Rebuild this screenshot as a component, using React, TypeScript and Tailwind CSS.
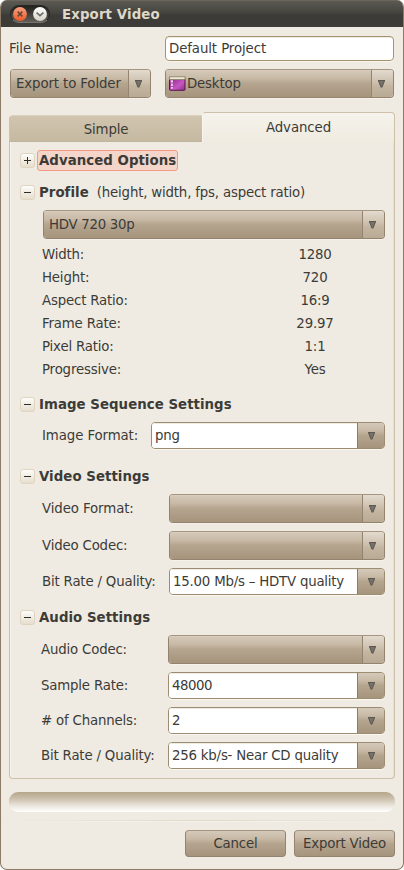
import type { ReactNode } from "react";

function Arrow() {
  return (
    <svg width="7" height="8" viewBox="0 0 7 8" className="block">
      <path d="M0 0.5H7L4.2 7.5H2.8Z" fill="#77716a" />
      <path d="M0 0.5H7M0.7 1L3.1 7.3M6.3 1L3.9 7.3" stroke="#5c5953" strokeWidth="1" fill="none" />
    </svg>
  );
}

const dark = "bg-[linear-gradient(#d5c9b9_0%,#c8baa6_30%,#b5a58f_50%,#a6947c_100%)]";

function Combo({ className, children }: { className: string; children?: ReactNode }) {
  return (
    <div className={`flex h-[29px] overflow-hidden rounded-[4px] border border-[#93836f] border-t-[#a39580] shadow-[0_1px_0_#f6f2ea] ${className}`}>
      <div className={`flex min-w-0 flex-1 items-center whitespace-nowrap pl-[5px] shadow-[inset_0_1px_0_#d8cdbf] ${dark}`}>{children}</div>
      <div className="flex w-[22px] items-center justify-center border-l border-[#93836f] bg-[linear-gradient(#e3dbcf_0%,#d2c6b5_35%,#c3b5a0_60%,#b9aa94_100%)] pr-[2px] pt-px">
        <Arrow />
      </div>
    </div>
  );
}

function Entry({ className, children }: { className: string; children?: ReactNode }) {
  return (
    <div className={`flex h-[27px] overflow-hidden rounded-[4px] border border-[#9c8c72] shadow-[0_1px_0_#faf7f1] ${className}`}>
      <div className="flex min-w-0 flex-1 items-center whitespace-nowrap bg-white pl-[3px] shadow-[inset_0_1px_0_#eeeae4]">{children}</div>
      <div className={`flex w-[27px] items-center justify-center border-l border-[#8c7d69] pl-px ${dark}`}>
        <Arrow />
      </div>
    </div>
  );
}

function Heading({ open = true, className, children }: { open?: boolean; className: string; children: ReactNode }) {
  return (
    <div className={`flex h-[21px] items-center pl-[10px] ${className}`}>
      <div className="mr-[2px] flex h-[15px] w-[15px] shrink-0 items-center justify-center rounded-[3px] border border-[#dfd4c0] bg-gradient-to-b from-[#fdfcfa] to-[#e6dece]">
        <svg width="9" height="9" viewBox="0 0 9 9">
          <path d={open ? "M1 4.5H8" : "M1 4.5H8M4.5 1V8"} stroke="#2f2e2a" />
        </svg>
      </div>
      {children}
    </div>
  );
}

function Title({ children }: { children: ReactNode }) {
  return <b className="ml-[2px] tracking-[0.04px]">{children}</b>;
}

function Row({ label, className, labelClass, children }: { label: string; className: string; labelClass: string; children: ReactNode }) {
  return (
    <div className={`flex items-center pr-[9px] ${className}`}>
      <div className={`shrink-0 whitespace-nowrap ${labelClass}`}>{label}</div>
      {children}
    </div>
  );
}

const profile = [
  ["Width:", "1280"],
  ["Height:", "720"],
  ["Aspect Ratio:", "16:9"],
  ["Frame Rate:", "29.97"],
  ["Pixel Ratio:", "1:1"],
  ["Progressive:", "Yes"],
];

export default function App() {
  return (
    <div className="h-[870px] w-[404px] bg-white font-['DejaVu_Sans',sans-serif] text-[13.33px] leading-[16px] tracking-[-0.18px] text-[#3c3b37]">
      <div className="flex h-[870px] flex-col overflow-hidden rounded-[7px] border border-[#8b7b67] border-t-0 bg-[#efebe3]">
        <header className="flex h-[27px] shrink-0 items-center border-t border-[#69665d] bg-[linear-gradient(#5b5952_0%,#45443f_45%,#3c3b37_55%)] pl-[9px]">
          <div className="flex h-[18px] w-[40px] items-center gap-[6px] rounded-full border border-[#282723] border-b-[#77756d] bg-gradient-to-b from-[#22211e] to-[#62605a] pl-[2px]">
            <svg width="14" height="14" viewBox="0 0 15 15">
              <defs>
                <linearGradient id="orange" x2="0" y2="1">
                  <stop stopColor="#f9a17f" />
                  <stop offset="1" stopColor="#ec5a28" />
                </linearGradient>
              </defs>
              <circle cx="7.5" cy="7.5" r="7.4" fill="url(#orange)" />
              <path d="M5 5L10 10M10 5L5 10" stroke="#6b4434" strokeWidth="1.7" />
            </svg>
            <svg width="14" height="14" viewBox="0 0 15 15">
              <defs>
                <linearGradient id="ivory" x2="0" y2="1">
                  <stop stopColor="#ffffff" />
                  <stop offset="1" stopColor="#d6d2c9" />
                </linearGradient>
              </defs>
              <circle cx="7.5" cy="7.5" r="7.4" fill="url(#ivory)" />
              <path d="M3.8 6L7.5 9.3L11.2 6" fill="none" stroke="#6d6a63" strokeWidth="1.6" />
            </svg>
          </div>
          <div className="ml-[12px] pt-[2px] text-[13.33px] font-bold tracking-[0.12px] text-[#dfd8c8]">Export Video</div>
        </header>

        <div className="mt-[9px] flex h-[25px] shrink-0 items-center pl-[8px] pr-[9px]">
          <div className="w-[156px] tracking-[-0.04px]">File Name:</div>
          <div className="flex h-[25px] flex-1 items-center rounded-[4px] border border-[#a4946f] bg-white pl-[3px] tracking-[-0.1px] shadow-[inset_0_1px_0_#eeeae4,0_1px_0_#f8f5ee]">Default Project</div>
        </div>

        <div className="mt-[8px] flex shrink-0 gap-[14px] pl-[9px] pr-[9px]">
          <Combo className="w-[141px]"><span className="tracking-[-0.12px]">Export to Folder</span></Combo>
          <Combo className="flex-1">
            <svg width="17" height="15" viewBox="0 0 17 15" className="-ml-[2px] mr-px">
              <defs>
                <linearGradient id="screen" x2="1" y2="1">
                  <stop stopColor="#8f1d85" />
                  <stop offset="0.6" stopColor="#c558c2" />
                  <stop offset="1" stopColor="#902d88" />
                </linearGradient>
              </defs>
              <rect x="0.5" y="2" width="15.5" height="12.3" rx="0.8" fill="url(#screen)" stroke="#57154f" />
              <rect x="0.5" y="0.8" width="15.5" height="2.8" fill="#ece7d4" stroke="#858064" strokeWidth="0.8" />
              <path d="M1.6 4.2H4V6.6H1.6ZM2 7.6H3.8V10H2ZM2 11H3.8V12.8H2Z" fill="#e7d5e4" />
            </svg>
            Desktop
          </Combo>
        </div>

        <div className="mt-[14px] flex h-[30px] shrink-0 items-end pl-[8px] pr-[8px]">
          <div className="flex h-[27px] w-[193px] items-center justify-center rounded-tl-[4px] border border-r-0 border-b-[#c2b59e] border-l-[#cfc2ac] border-t-[#d9d0bf] bg-gradient-to-b from-[#d1c5af] to-[#c6b9a1] pt-[2px]">Simple</div>
          <div className="flex h-[30px] flex-1 items-center justify-center rounded-t-[4px] border border-b-0 border-[#cdc0a9] border-l-[#f8f5ee] bg-gradient-to-b from-[#f6f3ed] to-[#efebe0] tracking-[-0.1px]">Advanced</div>
        </div>

        <main className="mx-[8px] flex h-[637px] shrink-0 flex-col rounded-b-[4px] border border-t-0 border-[#cdc0a9] shadow-[inset_1px_0_0_#f7f4ed,inset_-1px_0_0_#eae1d1]">
          <Heading open={false} className="mt-[8px]">
            <div className="flex h-[21px] w-[141px] shrink-0 items-center rounded-[3px] border border-[#f59a82] bg-[#f3d5ca] pl-px font-bold whitespace-nowrap tracking-[0.04px]">Advanced Options</div>
          </Heading>
          <Heading className="mt-[11px]">
            <Title>Profile</Title>
            <span className="ml-[8px] whitespace-nowrap">(height, width, fps, aspect ratio)</span>
          </Heading>
          <Combo className="ml-[33px] mr-[9px] mt-[7px] shrink-0"><span className="tracking-[-0.28px]">HDV 720 30p</span></Combo>
          <div className="mt-[4px]">
            {profile.map(([k, v]) => (
              <div key={k} className="flex h-[23px] items-center pl-[32px]">
                <div className="w-[223px]">{k}</div>
                <div className="w-[100px] text-center">{v}</div>
              </div>
            ))}
          </div>

          <Heading className="mt-[13px]"><Title>Image Sequence Settings</Title></Heading>
          <Row label="Image Format:" className="mt-[7px] pl-[32px]" labelClass="w-[109px] tracking-[-0.1px]">
            <Entry className="flex-1">png</Entry>
          </Row>

          <Heading className="mt-[17px]"><Title>Video Settings</Title></Heading>
          <Row label="Video Format:" className="mt-[7px] pl-[32px]" labelClass="w-[127px] tracking-[-0.1px]"><Combo className="flex-1" /></Row>
          <Row label="Video Codec:" className="mt-[8px] pl-[32px]" labelClass="w-[127px]"><Combo className="flex-1" /></Row>
          <Row label="Bit Rate / Quality:" className="mt-[8px] pl-[32px]" labelClass="w-[127px]">
            <Entry className="flex-1"><span className="tracking-[-0.21px]">15.00 Mb/s – HDTV quality</span></Entry>
          </Row>

          <Heading className="mt-[12px]"><Title>Audio Settings</Title></Heading>
          <Row label="Audio Codec:" className="mt-[7px] pl-[31px]" labelClass="w-[127px]"><Combo className="flex-1" /></Row>
          <Row label="Sample Rate:" className="mt-[8px] pl-[31px]" labelClass="w-[127px]"><Entry className="flex-1"><span className="tracking-[-0.45px]">48000</span></Entry></Row>
          <Row label="# of Channels:" className="mt-[8px] pl-[31px]" labelClass="w-[127px]"><Entry className="flex-1">2</Entry></Row>
          <Row label="Bit Rate / Quality:" className="mt-[8px] pl-[31px]" labelClass="w-[127px]"><Entry className="flex-1"><span className="tracking-[-0.21px]">256 kb/s- Near CD quality</span></Entry></Row>
        </main>

        <div className="mx-[8px] mt-[13px] h-[20px] shrink-0 rounded-[9px] bg-[linear-gradient(#b5a58b_0%,#cdc2ae_35%,#ebe6de_70%,#ffffff_100%)]" />
        <div className="mt-[8px] h-px shrink-0 bg-gradient-to-r from-[#efebe3] via-[#e0d9c8] to-[#efebe3]" />
        <div className="h-px shrink-0 bg-gradient-to-r from-[#efebe3] via-[#f6f3ec] to-[#efebe3]" />
        <footer className="mt-[8px] flex shrink-0 justify-end gap-[8px] pr-[8px]">
          {["Cancel", "Export Video"].map((t) => (
            <button key={t} className={`h-[27px] w-[101px] whitespace-nowrap rounded-[4px] border border-[#93836f] border-t-[#a39580] ${dark}`}>{t}</button>
          ))}
        </footer>
      </div>
    </div>
  );
}
